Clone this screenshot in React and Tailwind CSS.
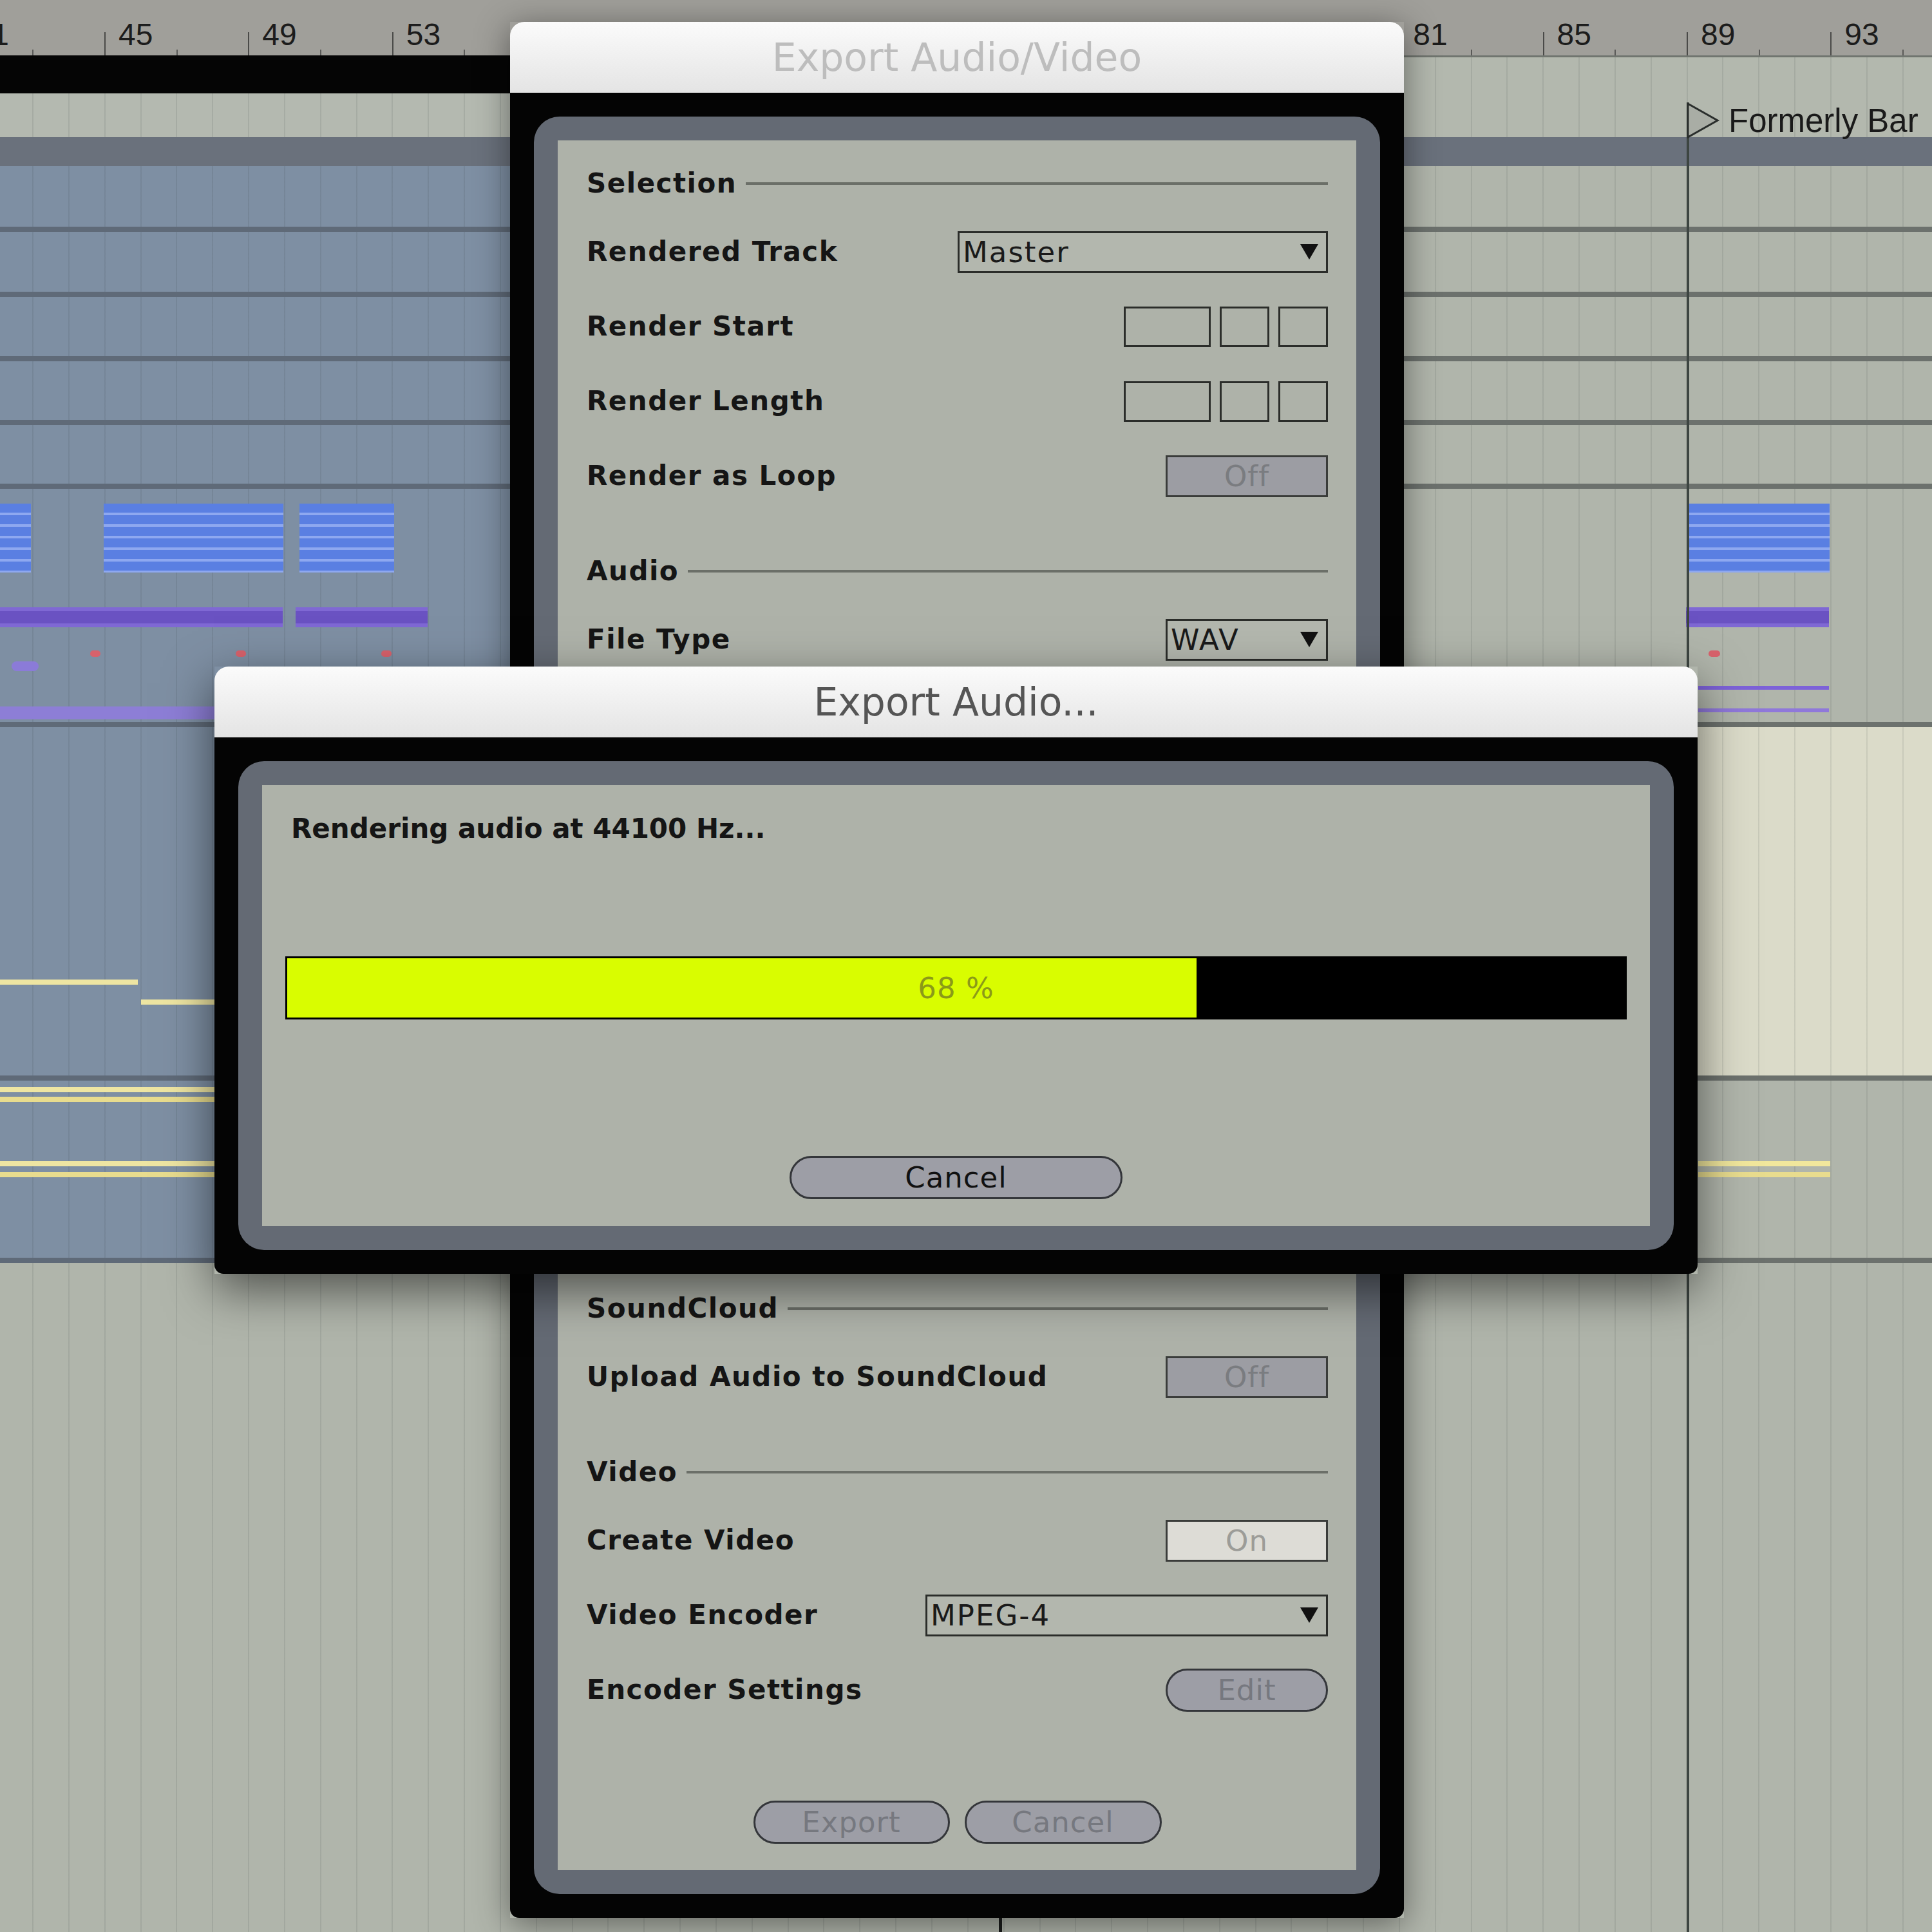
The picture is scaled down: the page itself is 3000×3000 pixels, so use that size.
import React from 'react';

const GRID =
  "bg-[image:repeating-linear-gradient(90deg,transparent_0px,transparent_50px,rgba(40,50,50,0.10)_50px,rgba(40,50,50,0.10)_52px,transparent_52px,transparent_55.84px)] bg-fixed";

function Ruler() {
  const bars = [];
  for (let n = 41; n <= 95; n += 2) bars.push(n);
  return (
    <div className="relative h-[86px] bg-[#a09f9a] font-['Liberation_Sans',Arial,sans-serif] text-[48px] text-[#1c1c1c]">
      {bars.map((n) => {
        const x = 162 + (n - 45) * 55.84;
        const major = (n - 45) % 4 === 0;
        const hidden = x + 22 > 740 && x + 22 < 2180;
        return major ? (
          <React.Fragment key={n}>
            <div className="absolute top-[50px] h-[36px] w-[2px] bg-[#4a4a48]" style={{ left: x }} />
            {!hidden && (
              <div className="absolute top-[30px] leading-none" style={{ left: x + 22 }}>
                {n}
              </div>
            )}
          </React.Fragment>
        ) : (
          <div key={n} className="absolute top-[77px] h-[9px] w-[2px] bg-[#5a5a58]" style={{ left: x }} />
        );
      })}
    </div>
  );
}

function Sep() {
  return (
    <div className="flex h-[8px]">
      <div className="w-[1400px] bg-[#5f6a78]" />
      <div className="flex-1 bg-[#6c716d]" />
    </div>
  );
}

function Track({ h, right = 'bg-[#b0b5ab]', leftChildren, rightChildren }) {
  return (
    <div className={`flex ${h}`}>
      <div className={`relative w-[1400px] bg-[#7e8fa3] ${GRID}`}>{leftChildren}</div>
      <div className={`relative flex-1 ${right} ${GRID}`}>{rightChildren}</div>
    </div>
  );
}

const NOTES =
  "bg-[image:repeating-linear-gradient(180deg,#5a7fe2_0px,#5a7fe2_14px,#8ea8f0_14px,#8ea8f0_18px)]";

function Label({ children, tight }) {
  return (
    <span
      className={`font-bold text-[42px] text-[#151515] leading-none ${
        tight ? 'tracking-[0px]' : 'tracking-[1.5px]'
      }`}
    >
      {children}
    </span>
  );
}

function Header({ children, className = '' }) {
  return (
    <div className={`flex items-center h-[70px] ${className}`}>
      <Label>{children}</Label>
      <div className="flex-1 h-[4px] ml-[14px] bg-[#6b6f68]" />
    </div>
  );
}

function Row({ label, children, className = '' }) {
  return (
    <div className={`flex items-center justify-between h-[70px] ${className}`}>
      <Label>{label}</Label>
      {children}
    </div>
  );
}

function Dropdown({ value, w }) {
  return (
    <div
      className={`${w} h-[65px] border-[3px] border-[#2b2d2a] bg-[#b3b7ae] flex items-center justify-between pl-[5px] pr-[12px] text-[45px] leading-none tracking-[2px] text-[#1a1a1a]`}
    >
      <span>{value}</span>
      <svg width="28" height="24" viewBox="0 0 28 24">
        <polygon points="0,0 28,0 14,24" fill="#111" />
      </svg>
    </div>
  );
}

function Boxes() {
  return (
    <div className="flex gap-[14px]">
      <div className="w-[135px] h-[63px] border-[3px] border-[#2b2d2a]" />
      <div className="w-[77px] h-[63px] border-[3px] border-[#2b2d2a]" />
      <div className="w-[77px] h-[63px] border-[3px] border-[#2b2d2a]" />
    </div>
  );
}

function Toggle({ on }) {
  return (
    <div
      className={`w-[252px] h-[65px] border-[3px] border-[#3a3c3a] flex items-center justify-center text-[45px] leading-none tracking-[1px] ${
        on ? 'bg-[#dddcd6] text-[#9c9c98]' : 'bg-[#9c9da3] text-[#7a7c80]'
      }`}
    >
      {on ? 'On' : 'Off'}
    </div>
  );
}

function Pill({ children, w, dark }) {
  return (
    <div
      className={`${w} h-[67px] rounded-full border-[3px] border-[#34363a] bg-[#9d9ea6] flex items-center justify-center text-[45px] leading-none tracking-[1px] ${
        dark ? 'text-[#111]' : 'text-[#76787f]'
      }`}
    >
      {children}
    </div>
  );
}

function Dialog({ title, titleColor, className, children }) {
  return (
    <div className={`absolute flex flex-col ${className}`}>
      <div
        className={`h-[110px] shrink-0 rounded-t-[22px] bg-linear-to-b from-[#fbfbfb] to-[#e4e4e4] flex items-center justify-center text-[60px] leading-none ${titleColor}`}
      >
        {title}
      </div>
      <div className="flex-1 bg-[#040404] rounded-b-[14px] p-[37px] flex flex-col">
        <div className="flex-1 rounded-[40px] bg-[#646a74] p-[37px] flex flex-col">
          <div className="flex-1 bg-[#aeb2a9] flex flex-col">{children}</div>
        </div>
      </div>
    </div>
  );
}

export default function App() {
  return (
    <div className="relative w-[3000px] h-[3000px] overflow-hidden flex flex-col bg-[#b0b5ab] font-['DejaVu_Sans',sans-serif]">
      <Ruler />
      {/* locator strip */}
      <div className="flex h-[127px]">
        <div className="w-[792px] flex flex-col">
          <div className="h-[59px] bg-[#050505]" />
          <div className={`flex-1 bg-[#b4b9b0] ${GRID}`} />
        </div>
        <div className={`flex-1 border-t-[3px] border-[#70756f] bg-[#b3b8ae] ${GRID}`} />
      </div>
      <div className="h-[45px] bg-[#6a717c]" />

      <Track h="h-[94px]" />
      <Sep />
      <Track h="h-[93px]" />
      <Sep />
      <Track h="h-[92px]" />
      <Sep />
      <Track h="h-[91px]" />
      <Sep />
      <Track h="h-[91px]" />
      <Sep />
      <Track
        h="h-[362px]"
        leftChildren={
          <>
            <div className={`absolute left-0 top-[23px] w-[48px] h-[107px] ${NOTES}`} />
            <div className={`absolute left-[161px] top-[23px] w-[279px] h-[107px] ${NOTES}`} />
            <div className={`absolute left-[465px] top-[23px] w-[147px] h-[107px] ${NOTES}`} />
            <div className="absolute left-0 top-[184px] w-[439px] h-[31px] bg-[#6a52c2] border-y-[6px] border-[#7f68d4]" />
            <div className="absolute left-[459px] top-[184px] w-[205px] h-[31px] bg-[#6a52c2] border-y-[6px] border-[#7f68d4]" />
            <div className="absolute left-[140px] top-[251px] w-[16px] h-[10px] rounded-full bg-[#d8626c]" />
            <div className="absolute left-[366px] top-[251px] w-[16px] h-[10px] rounded-full bg-[#d8626c]" />
            <div className="absolute left-[592px] top-[251px] w-[16px] h-[10px] rounded-full bg-[#d8626c]" />
            <div className="absolute left-[18px] top-[268px] w-[42px] h-[15px] rounded-full bg-[#8b7bd8]" />
            <div className="absolute left-0 top-[338px] w-[400px] h-[20px] bg-[#8d7ed6]" />
          </>
        }
        rightChildren={
          <>
            <div className={`absolute left-[1220px] top-[23px] w-[221px] h-[107px] ${NOTES}`} />
            <div className="absolute left-[1218px] top-[184px] w-[222px] h-[31px] bg-[#6a52c2] border-y-[6px] border-[#7f68d4]" />
            <div className="absolute left-[1253px] top-[251px] w-[18px] h-[10px] rounded-full bg-[#d8626c]" />
            <div className="absolute left-[1237px] top-[306px] w-[203px] h-[6px] bg-[#7d62d8]" />
            <div className="absolute left-[1237px] top-[341px] w-[203px] h-[6px] bg-[#8f78da]" />
          </>
        }
      />
      <Sep />
      <Track
        h="h-[541px]"
        right="bg-[#dbdbc9]"
        leftChildren={
          <>
            <div className="absolute left-0 top-[392px] w-[214px] h-[8px] bg-[#eee5a2]" />
            <div className="absolute left-[219px] top-[423px] w-[200px] h-[8px] bg-[#eee5a2]" />
          </>
        }
      />
      <Sep />
      <Track
        h="h-[275px]"
        leftChildren={
          <>
            <div className="absolute left-0 top-[10px] w-[400px] h-[8px] bg-[#eee5a2]" />
            <div className="absolute left-0 top-[25px] w-[400px] h-[8px] bg-[#e8dc8e]" />
            <div className="absolute left-0 top-[125px] w-[400px] h-[8px] bg-[#eee5a2]" />
            <div className="absolute left-0 top-[142px] w-[400px] h-[8px] bg-[#e8dc8e]" />
          </>
        }
        rightChildren={
          <>
            <div className="absolute left-[1237px] top-[125px] w-[205px] h-[8px] bg-[#f1e79c]" />
            <div className="absolute left-[1237px] top-[142px] w-[205px] h-[8px] bg-[#e8dc8e]" />
          </>
        }
      />
      <Sep />
      <div className={`flex-1 bg-[#b0b5ab] ${GRID}`} />

      {/* locator lines and marker */}
      <div className="absolute left-[2619px] top-[159px] w-[4px] h-[2841px] bg-[#3d4541]" />
      <div className="absolute left-[1551px] top-[159px] w-[5px] h-[2841px] bg-[#1b1d1c]" />
      <div className="absolute left-[2619px] top-[159px] flex items-center h-[56px] font-['Liberation_Sans',Arial,sans-serif] text-[51px] text-[#1a1a1a] leading-none">
        <svg width="52" height="56" viewBox="0 0 52 56">
          <polygon points="2,2 48,28 2,54" fill="#a9ada5" stroke="#2a2e2c" strokeWidth="3" />
        </svg>
        <span className="ml-[13px]">Formerly Bar</span>
      </div>

      {/* Export Audio/Video dialog */}
      <Dialog
        title="Export Audio/Video"
        titleColor="text-[#bdbdbd]"
        className="left-[792px] top-[34px] w-[1388px] h-[2944px] shadow-[0_10px_50px_rgba(0,0,0,0.45)]"
      >
        <div className="flex flex-col pl-[45px] pr-[44px]">
          <Header className="mt-[32px]">Selection</Header>
          <Row label="Rendered Track" className="mt-[36px]">
            <Dropdown value="Master" w="w-[575px]" />
          </Row>
          <Row label="Render Start" className="mt-[46px]">
            <Boxes />
          </Row>
          <Row label="Render Length" className="mt-[46px]">
            <Boxes />
          </Row>
          <Row label="Render as Loop" className="mt-[46px]">
            <Toggle />
          </Row>
          <Header className="mt-[78px]">Audio</Header>
          <Row label="File Type" className="mt-[36px]">
            <Dropdown value="WAV" w="w-[252px]" />
          </Row>
          <Header className="mt-[969px]">SoundCloud</Header>
          <Row label="Upload Audio to SoundCloud" className="mt-[36px]">
            <Toggle />
          </Row>
          <Header className="mt-[78px]">Video</Header>
          <Row label="Create Video" className="mt-[36px]">
            <Toggle on />
          </Row>
          <Row label="Video Encoder" className="mt-[46px]">
            <Dropdown value="MPEG-4" w="w-[625px]" />
          </Row>
          <Row label="Encoder Settings" className="mt-[46px]">
            <Pill w="w-[252px]">Edit</Pill>
          </Row>
          <div className="mt-[137px] flex justify-center gap-[23px]">
            <Pill w="w-[305px]">Export</Pill>
            <Pill w="w-[306px]">Cancel</Pill>
          </div>
        </div>
      </Dialog>

      {/* Export Audio... progress dialog */}
      <Dialog
        title="Export Audio..."
        titleColor="text-[#555555]"
        className="left-[333px] top-[1035px] w-[2303px] h-[943px] shadow-[0_25px_70px_rgba(0,0,0,0.55)]"
      >
        <div className="flex flex-col px-[36px]">
          <div className="mt-[38px] h-[60px] flex items-center pl-[9px]">
            <Label tight>Rendering audio at 44100 Hz...</Label>
          </div>
          <div className="relative mt-[168px] h-[98px] border-[3px] border-black bg-black flex">
            <div className="w-[68%] bg-[#d9fd00]" />
            <div className="absolute inset-0 flex items-center justify-center text-[45px] leading-none tracking-[1px] text-[#8b9a18]">
              68 %
            </div>
          </div>
          <div className="mt-[212px] flex justify-center">
            <Pill w="w-[517px]" dark>
              Cancel
            </Pill>
          </div>
        </div>
      </Dialog>
    </div>
  );
}
